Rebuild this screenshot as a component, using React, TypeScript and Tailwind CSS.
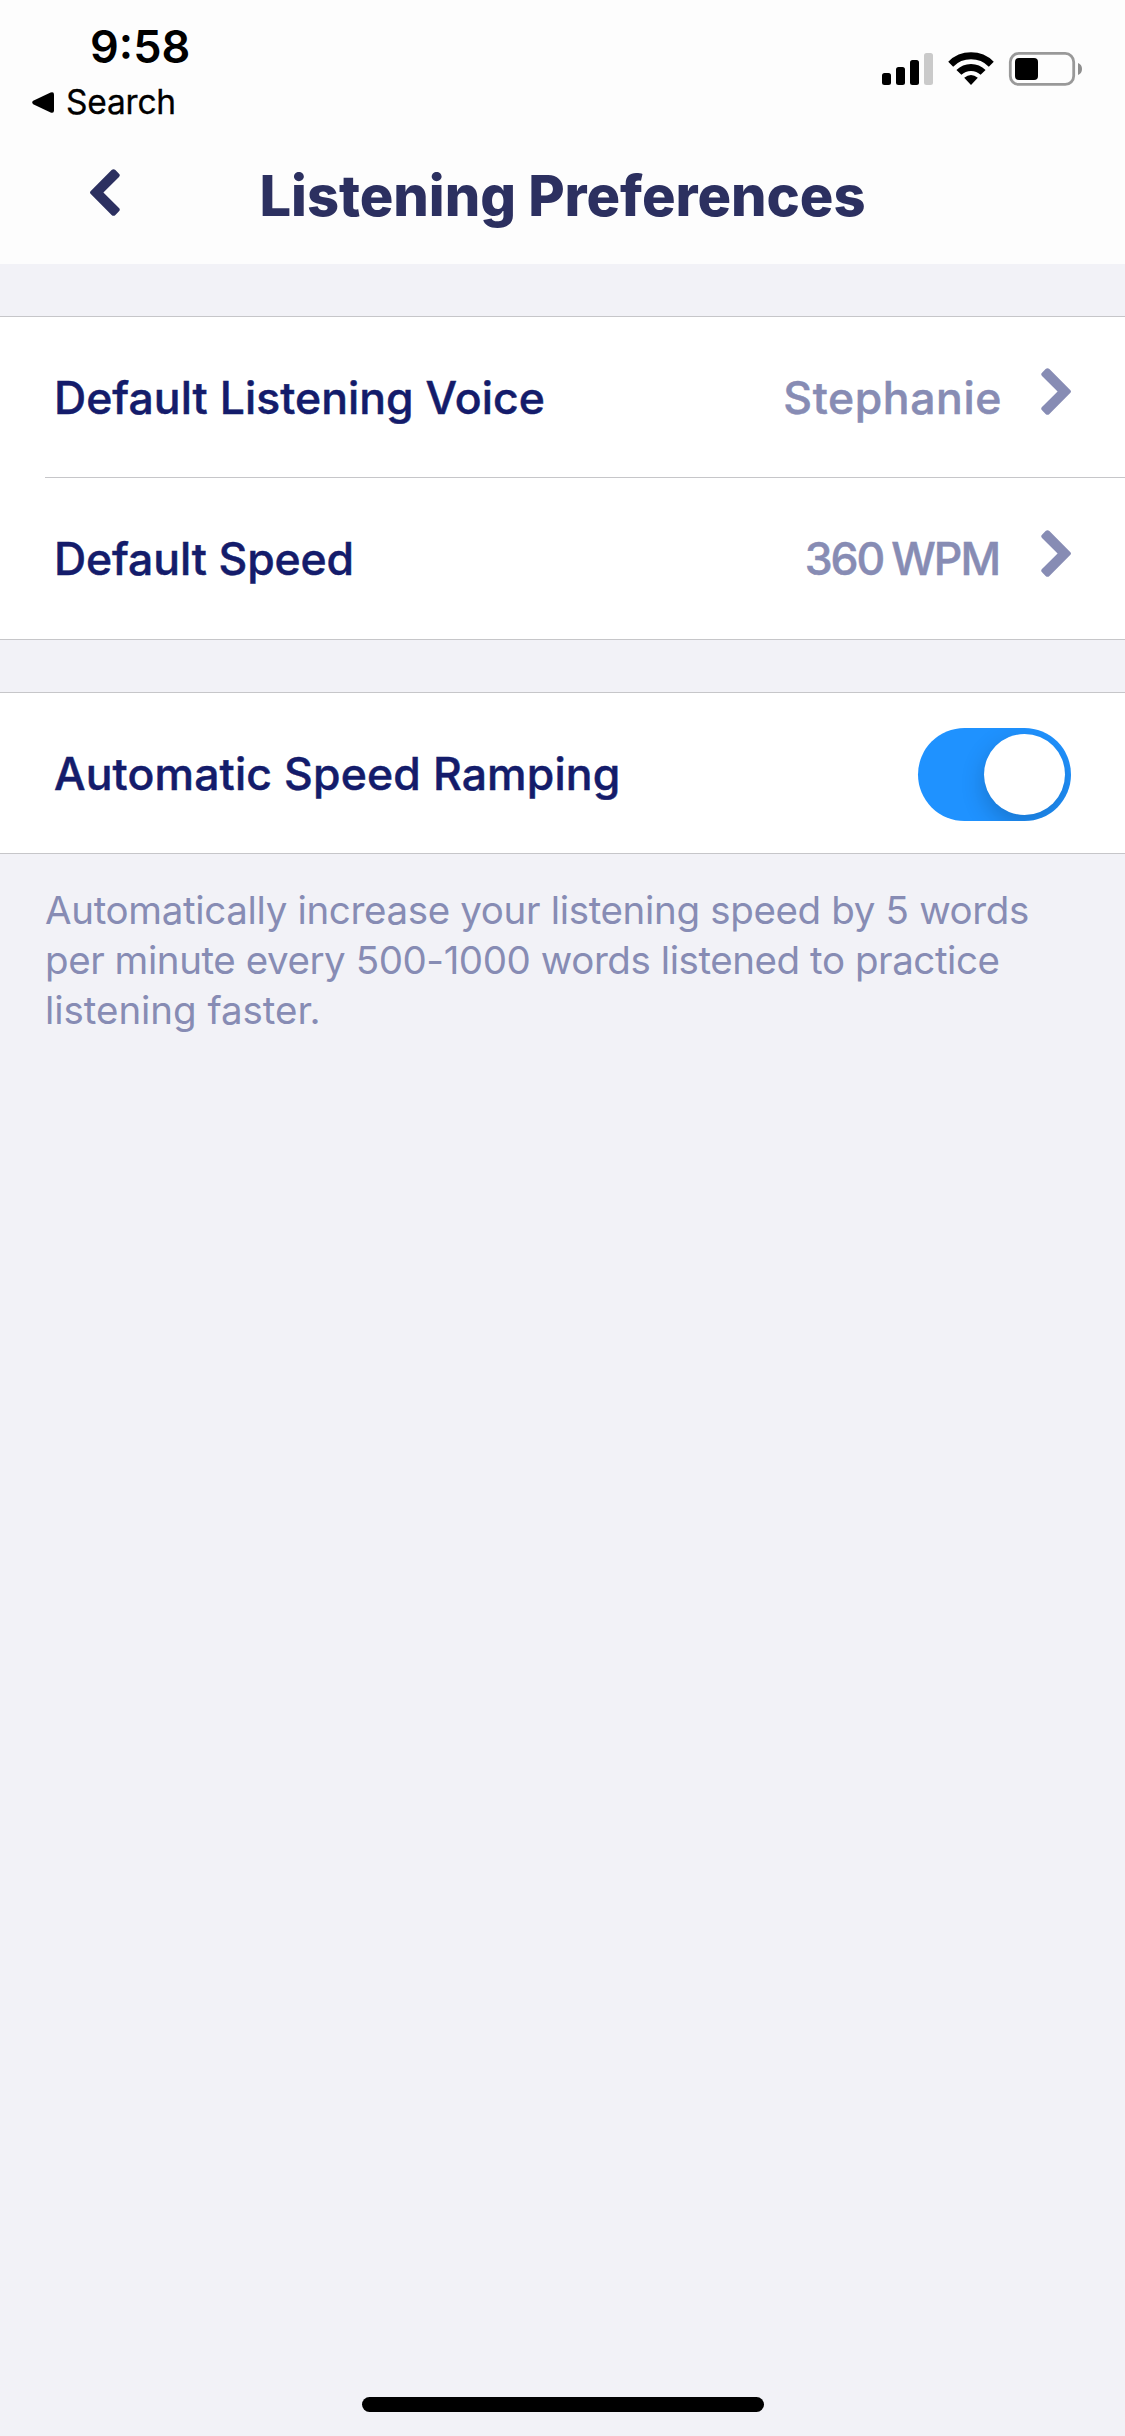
import React from 'react'

type RowProps = {
  label: string
  labelClass?: string
  className?: string
  children: React.ReactNode
}

type ChevronProps = {
  direction: 'left' | 'right'
  className?: string
}

function Chevron({ direction, className = '' }: ChevronProps) {
  return (
    <svg width="30" height="47" viewBox="0 0 30 47" className={className} aria-hidden="true">
      <path
        d={
          direction === 'left'
            ? 'M21.6 1.1Q23.5-.8 25.4 1.1L29 4.7Q30.6 6.3 29 7.9L13.4 23.5L29 39.1Q30.6 40.7 29 42.3L25.4 45.9Q23.5 47.8 21.6 45.9L.8 25.1Q-.8 23.5 .8 21.9Z'
            : 'M8.4 1.1Q6.5-.8 4.6 1.1L1 4.7Q-.6 6.3 1 7.9L16.6 23.5L1 39.1Q-.6 40.7 1 42.3L4.6 45.9Q6.5 47.8 8.4 45.9L29.2 25.1Q30.8 23.5 29.2 21.9Z'
        }
        fill="currentColor"
      />
    </svg>
  )
}

function StatusIcons() {
  return (
    <svg width="201" height="35" viewBox="0 0 201 35" aria-hidden="true">
      {/* Signal */}
      <rect x="0" y="21" width="9" height="12" rx="2.5" />
      <rect x="14" y="15" width="9" height="18" rx="2.5" />
      <rect x="28" y="8" width="9" height="25" rx="2.5" />
      <rect x="42" y="1" width="9" height="32" rx="2.5" fill="#cacaca" />

      {/* Wi-Fi */}
      <g fill="none" stroke="#000">
        <path d="M68.7 12.2A28.8 28.8 0 0 1 109.3 12.2" strokeWidth="7" />
        <path d="M76.9 20.4A17.1 17.1 0 0 1 101.1 20.4" strokeWidth="7" />
      </g>
      <path d="M82.2 25.8Q89 20.2 95.8 25.8L89 33Z" />

      {/* Battery */}
      <rect x="128.3" y="1.4" width="63.4" height="31" rx="8.5" fill="none" stroke="#999" strokeWidth="2.8" />
      <rect x="133" y="6" width="23" height="22" rx="4" />
      <path d="M196 11Q200 12.5 200 17T196 23Z" fill="#8e8e8e" />
    </svg>
  )
}

function Row({ label, labelClass = '', className = 'h-[160px]', children }: RowProps) {
  return (
    <div
      className={`flex items-center justify-between px-[54px] text-[44.5px] font-medium [-webkit-text-stroke:0.5px] ${className}`}
    >
      <span className={`pt-[2px] text-[#141c6b] ${labelClass}`}>{label}</span>
      {children}
    </div>
  )
}

export default function App() {
  return (
    <div className="flex h-[2436px] w-[1125px] flex-col bg-[#f2f2f7] font-['Inter','Liberation_Sans',sans-serif] whitespace-nowrap">
      <header className="h-[264px] bg-[#fdfdfd]">
        {/* Status bar */}
        <div className="flex h-[132px] justify-between pr-[42px] pl-[32px] text-black">
          <div>
            <div className="pt-[20px] pl-[58px] text-[45px] leading-[54px] font-semibold">9:58</div>
            <div className="mt-[8px] flex items-center gap-[12px]">
              <svg width="22" height="21" viewBox="0 0 22 21" aria-hidden="true">
                <path d="M1.2 8.8L18.6.6Q22 -.6 22 2.6V18.4Q22 21.6 18.6 20.4L1.2 12.2Q-.8 10.5 1.2 8.8Z" />
              </svg>
              <span className="text-[33.5px] leading-[40px] tracking-[-0.2px] [-webkit-text-stroke:0.3px]">Search</span>
            </div>
          </div>
          <div className="pt-[52px]">
            <StatusIcons />
          </div>
        </div>

        {/* Title bar */}
        <div className="grid h-[128px] grid-cols-[1fr_auto_1fr] items-center px-[90px] text-[#2c3060]">
          <Chevron direction="left" className="-mt-[8px]" />
          <h1 className="text-[56px] font-extrabold tracking-[-0.05px]">Listening Preferences</h1>
          <span />
        </div>
      </header>

      <section className="mt-[52px] border-y border-[#c6c6c9] bg-white">
        <Row label="Default Listening Voice" labelClass="tracking-[0.05px]">
          <div className="flex items-center text-[#878cb4]">
            <span className="pt-[2px] tracking-[0.6px]">Stephanie</span>
            <Chevron direction="right" className="-mt-[11px] ml-[39px]" />
          </div>
        </Row>
        <div className="ml-[45px] h-px bg-[#c6c6c9]" />
        <Row label="Default Speed" labelClass="tracking-[-0.1px]" className="h-[161px]">
          <div className="flex items-center text-[#878cb4]">
            <span className="pt-[2px] tracking-[-2px] [word-spacing:-2px]">360 WPM</span>
            <Chevron direction="right" className="-mt-[11px] ml-[42px]" />
          </div>
        </Row>
      </section>

      <section className="mt-[52px] border-y border-[#c6c6c9] bg-white">
        <Row label="Automatic Speed Ramping" labelClass="tracking-[0.15px]">
          <button
            role="switch"
            aria-checked="true"
            aria-label="Automatic Speed Ramping"
            className="mt-[3px] flex h-[93px] w-[153px] items-center justify-end overflow-hidden rounded-full bg-[#1f92ff] p-[6px]"
          >
            <span className="size-[81px] rounded-full bg-white shadow-[0_9px_24px_rgba(0,0,0,0.2)]" />
          </button>
        </Row>
      </section>

      <p className="mt-[31px] pl-[45px] text-[38.5px] leading-[50px] text-[#878cb4]">
        <span className="tracking-[-0.34px]">Automatically increase your listening speed by 5 words</span>
        <br />
        <span className="tracking-[-0.43px]">per minute every 500-1000 words listened to practice</span>
        <br />
        <span className="tracking-[-0.05px]">listening faster.</span>
      </p>

      {/* Home indicator */}
      <div className="mx-auto mt-auto mb-[24px] h-[15px] w-[402px] rounded-full bg-black" />
    </div>
  )
}
